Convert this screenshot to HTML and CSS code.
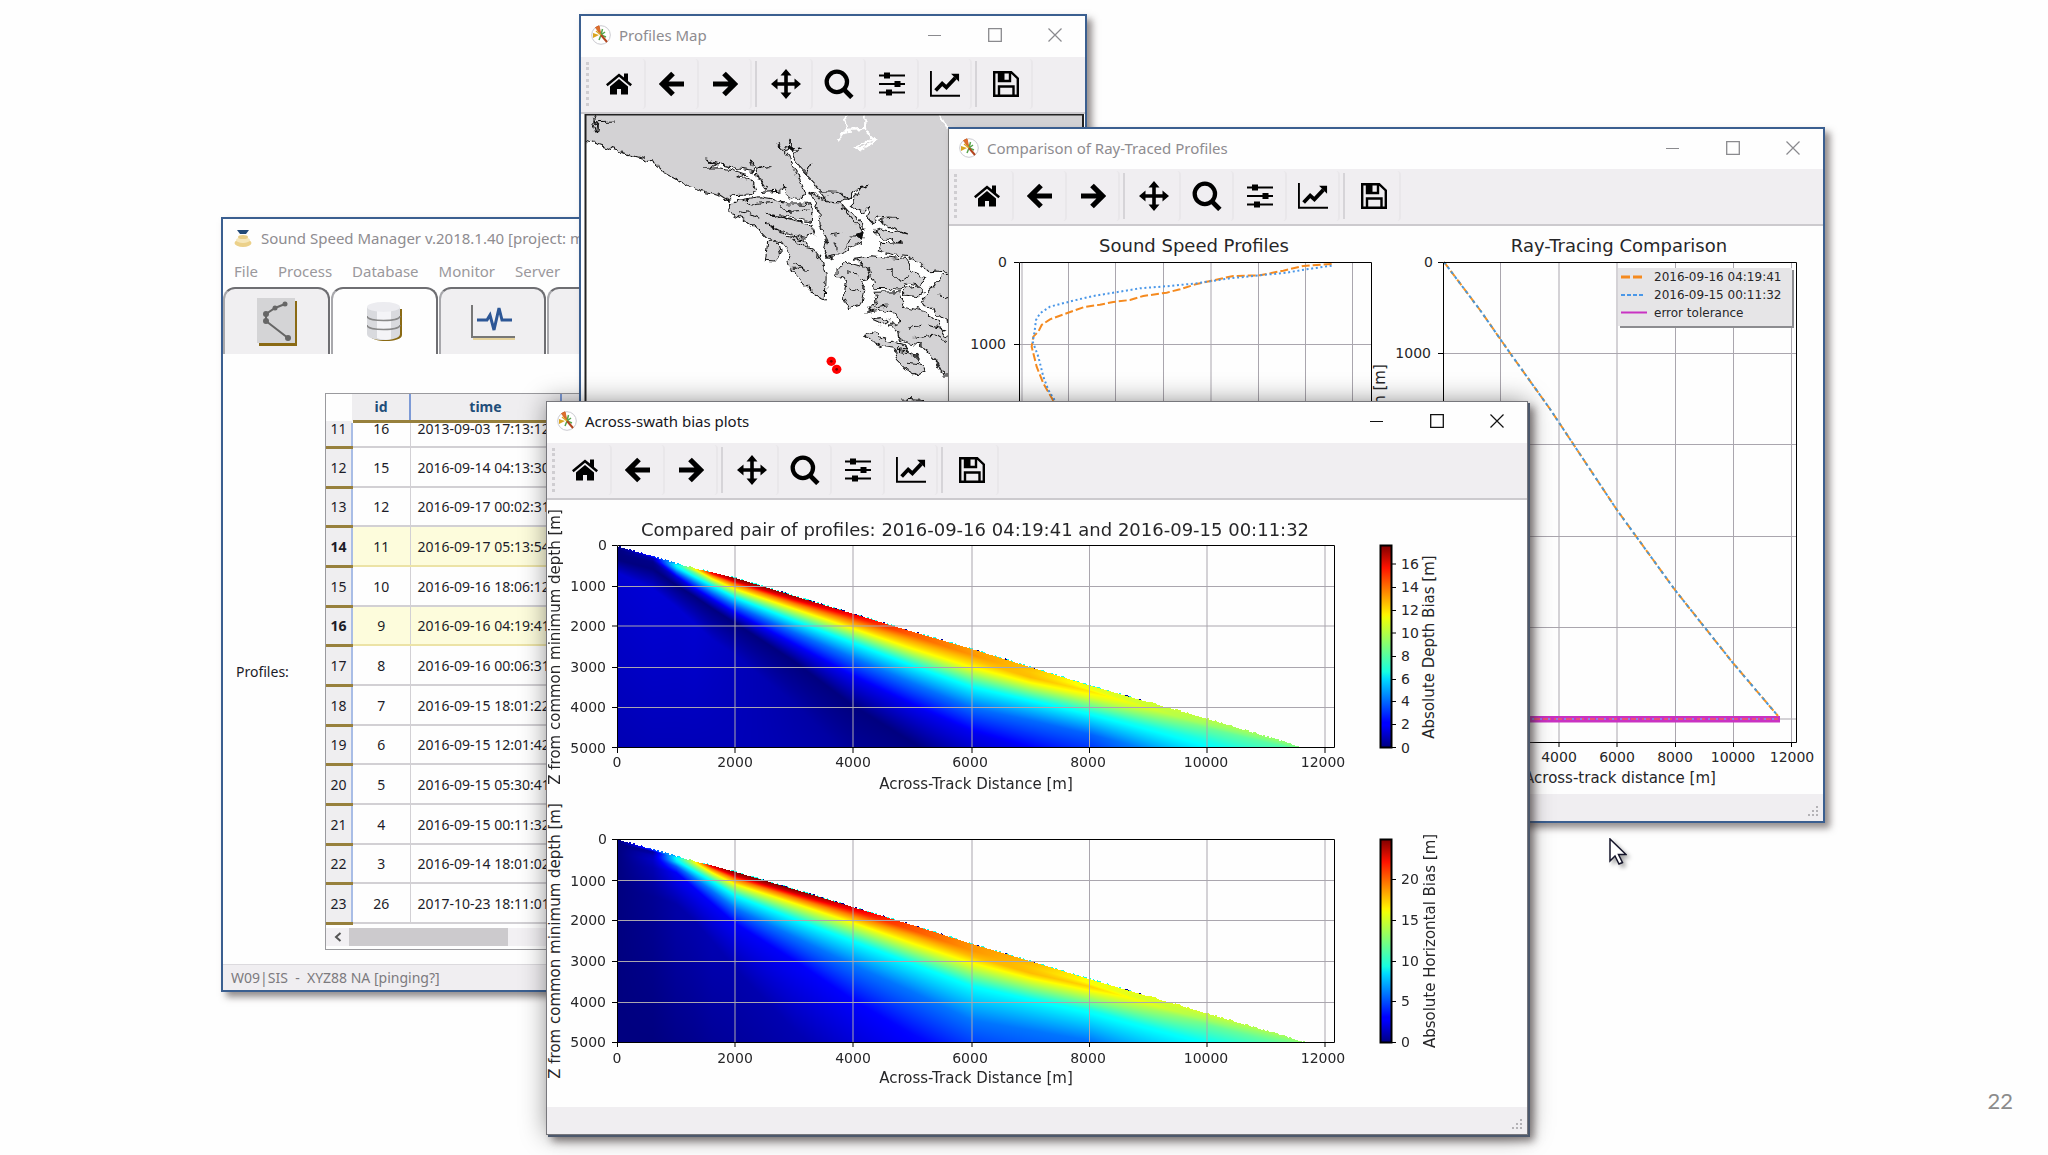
FILE: index.html
```html
<!DOCTYPE html>
<html lang="en">
<head>
<meta charset="utf-8">
<title>Sound Speed Manager</title>
<link rel="stylesheet" href="styles.css">
</head>
<body>
<svg class="defs" aria-hidden="true">
  <defs>
    <symbol id="app" viewBox="0 0 20 20">
      <circle cx="10" cy="10" r="9.300" fill="#fff" stroke="#c9c9cf" stroke-width="1"/>
      <path d="M10 10 4.500 2.500 8 .800z" fill="#e0702a" stroke="#d2642a" stroke-width="1"/>
      <path d="M8 10 2 13V8z" fill="#d9a520"/>
      <path d="M10 10l1.500-6M10 10l-2 5M10 10l4-3M10 10l5 2" stroke="#58a54c" stroke-width="1.500"/>
      <path d="m10 10 6 7" stroke="#b3441d" stroke-width="2"/>
      <path d="m5 6 5 4" stroke="#d9a520" stroke-width="1.400" fill="none"/>
    </symbol>
    <symbol id="home" viewBox="0 0 26 26">
      <path d="M13 8 4 15.500V23.500h7V18h4v5.500h7V15.500z"/>
      <path d="M13 2.500 0 13.300l1.600 1.900L13 5.800l11.400 9.400 1.600-1.900-4-3.400V2.500h-4v4.100z"/>
    </symbol>
    <symbol id="back" viewBox="0 0 26 26"><path d="m14 2.500-10.500 10.500L14 23.500M5 13h20" fill="none" stroke="#000" stroke-width="5.200"/></symbol>
    <symbol id="forward" viewBox="0 0 26 26"><path d="m12 2.500 10.500 10.500L12 23.500M21 13H1" fill="none" stroke="#000" stroke-width="5.200"/></symbol>
    <symbol id="pan" viewBox="0 0 30 30"><path d="m15 0 5.500 6.500h-3.700v6.700h6.700V9.500L30 15l-6.500 5.500v-3.700h-6.700v6.700h3.700L15 30l-5.500-6.500h3.700v-6.700H6.500v3.700L0 15l6.500-5.500v3.700h6.700V6.500H9.500z"/></symbol>
    <symbol id="zoom" viewBox="0 0 28 28"><circle cx="12" cy="12" r="9.500" fill="none" stroke="#000" stroke-width="4"/><path d="m18.500 19 7.500 7.500" stroke="#000" stroke-width="4.500"/></symbol>
    <symbol id="sliders" viewBox="0 0 26 26"><path d="M0 4.500h26M0 13h26M0 21.500h26" stroke="#000" stroke-width="2"/><path d="M5 1.500h6v6H5zM15.500 10h6v6h-6zM7 18.500h6v6H7z"/></symbol>
    <symbol id="chart" viewBox="0 0 32 28"><path d="M1 0v26.500h31" fill="none" stroke="#000" stroke-width="2"/><path d="m6 21 7-7.500 4.500 4L27 7.500" fill="none" stroke="#000" stroke-width="4"/><path d="M22.500 3H31v8.500z"/></symbol>
    <symbol id="save" viewBox="0 0 26 26"><path d="M1.200 1.200h17L24.800 7.500v17.300H1.200zM6 24V15.500h14.500V24M6 1.500v8.500h11V1.500" fill="none" stroke="#000" stroke-width="2.400"/><path d="M7 2h4.500v7H7z"/></symbol>
    <symbol id="min" viewBox="0 0 14 14"><path d="M0 7.500h13" stroke="currentColor"/></symbol>
    <symbol id="max" viewBox="0 0 14 14"><path d="M.700 .700h12.600v12.600H.700z" fill="none" stroke="currentColor" stroke-width="1.300"/></symbol>
    <symbol id="close" viewBox="0 0 14 14"><path d="m.500 .500 13 13m0-13-13 13" stroke="currentColor" stroke-width="1.200"/></symbol>
    <symbol id="grip" viewBox="0 0 12 12"><path d="M9 0h2v2H9zM9 4h2v2H9zM9 8h2v2H9zM5 4h2v2H5zM5 8h2v2H5zM1 8h2v2H1z"/></symbol>
    <linearGradient id="jet" x1="0" y1="1" x2="0" y2="0">
      <stop offset="0" stop-color="#000080"/><stop offset=".11" stop-color="#00f"/><stop offset=".125" stop-color="#00f"/>
      <stop offset=".34" stop-color="#00dcfe"/><stop offset=".375" stop-color="#16ffe1"/><stop offset=".64" stop-color="#eeff09"/>
      <stop offset=".66" stop-color="#fff200"/><stop offset=".89" stop-color="#ff1300"/><stop offset="1" stop-color="#800000"/>
    </linearGradient>
    <filter id="rough" x="-5%" y="-5%" width="110%" height="110%">
      <feTurbulence type="fractalNoise" baseFrequency=".05" numOctaves="2" seed="4"/>
      <feDisplacementMap in="SourceGraphic" scale="24" xChannelSelector="R" yChannelSelector="G"/>
    </filter>
  </defs>
</svg>

<main class="desktop">

<section class="window manager" aria-label="Sound Speed Manager">
  <header class="titlebar">
    <svg class="title-icon" viewBox="0 0 20 20"><ellipse cx="10" cy="15" rx="8.500" ry="4" fill="#ecd18a"/><ellipse cx="10" cy="12" rx="7" ry="3" fill="#f6e7ba"/><ellipse cx="10" cy="9" rx="5" ry="2" fill="#e8cd86"/><path d="M4 2h12l-3 4H7z" fill="#234a78"/></svg>
    <h1>Sound Speed Manager v.2018.1.40 [project: main]</h1>
  </header>
  <nav class="menu">
    <button>File</button><button>Process</button><button>Database</button><button>Monitor</button><button>Server</button><button>Setup</button>
  </nav>
  <div class="tabs" role="tablist">
    <button role="tab" aria-label="Editor"><svg width="40" height="48" viewBox="0 0 40 48"><path d="M2 3h38v45H2z" fill="#8a6a14"/><path d="M0 0h38v45H0z" fill="#d4d4d6"/><path d="m28 6-10 4-9 6v7l22 17" fill="none" stroke="#666" stroke-width="2"/><g fill="#666"><circle cx="28" cy="6" r="2.500"/><circle cx="18" cy="10" r="2.500"/><circle cx="9" cy="16" r="3"/><circle cx="9" cy="23" r="3"/><circle cx="31" cy="40" r="3"/></g></svg></button>
    <button role="tab" aria-selected="true" aria-label="Database"><svg width="36" height="40" viewBox="0 0 36 40"><path d="M3 7v26c0 8 32 8 32 0V7z" fill="#8a6a14"/><path d="M0 5v27c0 8 33 8 33 0V5z" fill="#d9dade"/><path d="M10 8v28c5 2 10 2 14 1V8z" fill="#f4f4f7"/><path d="M0 14c0 6 33 6 33 0M0 23c0 6 33 6 33 0" fill="none" stroke="#888" stroke-width="1.500"/><ellipse cx="16.500" cy="5" rx="16.500" ry="5" fill="#ececf0"/></svg></button>
    <button role="tab" aria-label="Monitor"><svg width="44" height="36" viewBox="0 0 44 36"><path d="M1 1v32h43" fill="none" stroke="#777" stroke-width="2"/><path d="M2 35h42" stroke="#e5d29c" stroke-width="2"/><path d="M6 16h10l3-5 4 15 5-22 3 12h10" fill="none" stroke="#2d5796" stroke-width="3"/></svg></button>
    <button role="tab" aria-label="Server"></button>
  </div>
  <div class="pane">
    <span class="label" id="profiles-label">Profiles:</span>
    <div class="grid">
      <table aria-labelledby="profiles-label">
        <thead><tr><td></td><th>id</th><th>time</th><th></th></tr></thead>
        <tbody>
          <tr><th>11</th><td>16</td><td>2013-09-03 17:13:12</td><td></td></tr>
          <tr><th>12</th><td>15</td><td>2016-09-14 04:13:30</td><td></td></tr>
          <tr><th>13</th><td>12</td><td>2016-09-17 00:02:31</td><td></td></tr>
          <tr class="selected"><th>14</th><td>11</td><td>2016-09-17 05:13:54</td><td></td></tr>
          <tr><th>15</th><td>10</td><td>2016-09-16 18:06:12</td><td></td></tr>
          <tr class="selected"><th>16</th><td>9</td><td>2016-09-16 04:19:41</td><td></td></tr>
          <tr><th>17</th><td>8</td><td>2016-09-16 00:06:31</td><td></td></tr>
          <tr><th>18</th><td>7</td><td>2016-09-15 18:01:22</td><td></td></tr>
          <tr><th>19</th><td>6</td><td>2016-09-15 12:01:42</td><td></td></tr>
          <tr><th>20</th><td>5</td><td>2016-09-15 05:30:41</td><td></td></tr>
          <tr><th>21</th><td>4</td><td>2016-09-15 00:11:32</td><td></td></tr>
          <tr><th>22</th><td>3</td><td>2016-09-14 18:01:02</td><td></td></tr>
          <tr><th>23</th><td>26</td><td>2017-10-23 18:11:01</td><td></td></tr>
        </tbody>
      </table>
      <div class="scrollbar"><button aria-label="Scroll left"><svg width="8" height="10" viewBox="0 0 8 10"><path d="M6.500 1 2 5l4.500 4" fill="none" stroke="#555" stroke-width="2"/></svg></button><span class="thumb"></span></div>
    </div>
  </div>
  <footer class="status">W09|SIS &nbsp;- &nbsp;XYZ88 NA [pinging?]</footer>
</section>

<section class="window map" aria-label="Profiles Map">
  <header class="titlebar">
    <svg class="title-icon"><use href="#app"/></svg>
    <h2>Profiles Map</h2>
    <div class="controls"><button aria-label="Minimize"><svg><use href="#min"/></svg></button><button aria-label="Maximize"><svg><use href="#max"/></svg></button><button aria-label="Close"><svg><use href="#close"/></svg></button></div>
  </header>
  <div class="toolbar">
    <button aria-label="Home"><svg><use href="#home"/></svg></button><button aria-label="Back"><svg><use href="#back"/></svg></button><button aria-label="Forward"><svg><use href="#forward"/></svg></button><i></i>
    <button aria-label="Pan"><svg class="wide"><use href="#pan"/></svg></button><button aria-label="Zoom"><svg class="wide"><use href="#zoom"/></svg></button><button aria-label="Subplots"><svg><use href="#sliders"/></svg></button><button aria-label="Edit axes"><svg class="wide"><use href="#chart"/></svg></button><i></i>
    <button aria-label="Save"><svg><use href="#save"/></svg></button>
  </div>
  <svg class="figure" viewBox="581 114 504 500">
    <svg x="585" y="114" width="499" height="500" viewBox="585 114 499 500">
    <g transform="translate(570 5) scale(.338 .3333)">
      <g filter="url(#rough)" stroke="#111" stroke-width="3" fill="#d3d2d4">
        <path d="M-40 290V395L75 415 115 428 180 450 240 467 270 490 278 502 315 522 350 545 400 560 440 568 470 588 480 572 530 570 550 560 545 540 525 520 490 515 520 508 480 494 440 488 400 490 435 480 400 462 450 480 500 492 545 500 532 462 550 490 590 485 552 492 560 520 578 545 570 562 625 558 632 545 640 565 655 578 688 584 695 565 688 540 675 512 655 480 648 455 615 415 645 440 655 400 655 435 685 428 658 445 672 475 700 505 715 480 702 515 735 550 760 572 800 565 822 582 835 570 850 545 885 541 858 548 838 585 832 600 850 615 870 625 892 600 880 640 895 655 910 630 970 635 915 640 930 660 1000 690 920 672 900 680 920 698 985 715 920 712 912 738 960 750 1000 755 1040 780 1062 800 1085 798 1105 800 1150 800 1600 900V200H-40Z"/>
        <path d="M472 600 500 585 560 575 600 582 640 596 700 598 716 610 714 650 640 632 585 625 650 645 715 660 724 690 690 700 630 680 580 655 640 690 690 705 720 735 740 760 758 810 755 885 730 875 690 835 660 800 645 770 652 745 625 710 590 705 560 675 520 645 490 632 470 625Z"/>
        <path d="M585 712 615 712 622 745 605 768 578 766Z"/>
        <path d="M710 562 735 575 760 590 800 590 820 615 850 645 868 680 862 715 830 728 800 752 760 760 752 735 760 705 740 660 735 610Z"/>
        <path d="M735 560 790 562 825 580 800 590 760 588ZM808 610 840 625 878 672 850 660Z"/>
        <path d="M790 790 820 772 855 782 880 770 888 820 860 825 872 850 865 895 825 908 808 870 818 830 790 812Z"/>
        <path d="M842 760 890 752 960 758 1000 765 1015 800 1055 822 1035 840 1000 835 975 852 900 850 890 800Z"/>
        <path d="M990 850 1030 842 1048 860 1030 875 990 870ZM1075 845 1100 810 1180 800V1000L1080 920 1035 890Z"/>
        <path d="M900 862 975 860 990 905 1050 920 1085 950 1110 990 1180 1010V1110H1105L1085 1070 1040 1020 980 1010 975 980 940 965 975 950 960 925 920 915 880 922 905 890Z"/>
        <path d="M890 942 920 938 950 948 920 956ZM875 992 905 980 920 1000 985 1018 1000 1035 960 1030 925 1025 905 1015Z"/>
        <path d="M960 1035 1000 1040 1035 1070 1050 1100 1030 1112 990 1090 968 1065Z"/>
        <path d="M80 328 70 345 82 360 78 385 70 350 132 348M980 1182 1055 1187 1000 1200M580 625 680 650M500 620 530 625 560 640M520 590 540 600 600 592M620 600 640 620 700 615M660 700 680 720 720 730M770 690 800 685M780 710 790 740M830 690 865 690M810 730 830 700M660 770 700 800M655 790 690 790M1000 1040 1030 1060M940 790 980 830 1000 815M830 850 860 860M820 800 850 810M1060 960 1110 975M1000 970 1040 960M1020 1000 1080 990 1110 1010M880 910 940 900M1090 870 1120 880M1000 1075 1040 1080" fill="none"/>
        <path d="M845 690 870 680 865 705ZM640 425 658 440 662 425Z" fill="#111"/>
      </g>
      <path d="M812 330 820 375 795 405M820 375 870 372 872 330M875 375 905 405 860 435 845 425 900 400M1090 330 1112 370" fill="none" stroke="#fff" stroke-width="7" filter="url(#rough)"/>
      <g fill="#f00"><circle cx="773" cy="1069" r="14"/><circle cx="789" cy="1093" r="14"/></g><g fill="#700"><circle cx="773" cy="1069" r="4"/><circle cx="789" cy="1093" r="4"/></g>
    </g>
    </svg>
    <path d="M585.500 620V114.500H1083V620" fill="none" stroke="#222" stroke-width="2"/>
  </svg>
</section>

<section class="window compare" aria-label="Comparison of Ray-Traced Profiles">
  <header class="titlebar">
    <svg class="title-icon"><use href="#app"/></svg>
    <h2>Comparison of Ray-Traced Profiles</h2>
    <div class="controls"><button aria-label="Minimize"><svg><use href="#min"/></svg></button><button aria-label="Maximize"><svg><use href="#max"/></svg></button><button aria-label="Close"><svg><use href="#close"/></svg></button></div>
  </header>
  <div class="toolbar">
    <button aria-label="Home"><svg><use href="#home"/></svg></button><button aria-label="Back"><svg><use href="#back"/></svg></button><button aria-label="Forward"><svg><use href="#forward"/></svg></button><i></i>
    <button aria-label="Pan"><svg class="wide"><use href="#pan"/></svg></button><button aria-label="Zoom"><svg class="wide"><use href="#zoom"/></svg></button><button aria-label="Subplots"><svg><use href="#sliders"/></svg></button><button aria-label="Edit axes"><svg class="wide"><use href="#chart"/></svg></button><i></i>
    <button aria-label="Save"><svg><use href="#save"/></svg></button>
  </div>
  <svg class="figure" viewBox="949 226 874 568">
    <path class="lines" d="M1022 262V742M1068.500 262V742M1115.500 262V742M1163.500 262V742M1211 262V742M1258.500 262V742M1305.500 262V742M1352.500 262V742M1019 344.500H1371"/>
    <g fill="none" stroke-width="6" transform="translate(940 120) scale(.3333)">
      <path stroke="#f58a1f" stroke-dasharray="24 9" d="M1175 432 1090 438 1030 452 960 466 880 468 815 482 770 492 720 508 680 518 610 528 570 540 520 546 480 554 430 562 380 580 330 598 305 615 295 635 280 650 275 680 290 740 310 790 340 842 360 900"/>
      <path stroke="#4a97e8" stroke-dasharray="6 8" d="M1175 437 1100 448 1040 458 960 466 870 475 770 490 690 498 600 505 540 515 460 528 400 542 330 560 300 580 288 600 283 640 278 665 295 710 310 770 325 810 345 842 360 900"/>
    </g>
    <path class="axes" d="M1019.500 262.500H1371.500V742H1019.500ZM1014 262.500H1019M1014 344.500H1019"/>
    <text class="figure-title" x="1194" y="252">Sound Speed Profiles</text>
    <text class="tick-y" x="1007" y="267">0</text><text class="tick-y" x="1006" y="349">1000</text>

    <path class="lines" d="M1500.500 262V742M1559 262V742M1617 262V742M1675.500 262V742M1733.500 262V742M1791.500 262V742M1444 353.500H1797M1444 444.500H1797M1444 536.500H1797M1444 627.500H1797M1444 719H1797"/>
    <path d="M1444 716H1780V722.500H1444Z" fill="#c932c2"/>
    <path d="M1444 719H1778" stroke="#e8507a" stroke-width="2" stroke-dasharray="8 3"/><path d="M1444 719H1778" stroke="#8f7bea" stroke-width="2" stroke-dasharray="2 6"/>
    <path fill="none" stroke="#f59322" stroke-width="2" d="M1444 262 1480 310 1510 353 1550 409 1617 510 1675 590 1733 663 1778 716" stroke-dasharray="7 4"/>
    <path fill="none" stroke="#4a97d8" stroke-width="2" d="M1444 262 1480 310 1510 353 1550 409 1617 510 1675 590 1733 663 1778 716" stroke-dasharray="3 3"/>
    <path class="axes" d="M1443.500 262.500H1796.500V742.500H1443.500ZM1438 262.500h5M1438 353.500h5M1559 742v5M1617 742v5M1675.500 742v5M1733.500 742v5M1791.500 742v5"/>
    <text class="figure-title" x="1619" y="252">Ray-Tracing Comparison</text>
    <text class="tick-y" x="1433" y="267">0</text><text class="tick-y" x="1431" y="358">1000</text>
    <text class="tick-x" x="1559" y="762">4000</text><text class="tick-x" x="1617" y="762">6000</text><text class="tick-x" x="1675" y="762">8000</text><text class="tick-x" x="1733" y="762">10000</text><text class="tick-x" x="1792" y="762">12000</text>
    <text class="axis-label" x="1620" y="783">Across-track distance [m]</text>
    <text class="axis-label" transform="translate(1385 502) rotate(-90)">Z from common minimum depth [m]</text>
    <path d="M1620 270h174v58h-174z" fill="#8c8c90"/><path d="M1618 268h174v58h-174z" fill="#e6e5e7"/>
    <path d="M1621 277h21" stroke="#f58a1f" stroke-width="3" stroke-dasharray="9 3"/><path d="M1621 295h24" stroke="#4a97e8" stroke-width="2" stroke-dasharray="4 2"/><path d="M1621 312.500h26" stroke="#c932c2" stroke-width="2"/>
    <text class="legend" x="1654" y="281">2016-09-16 04:19:41</text><text class="legend" x="1654" y="299">2016-09-15 00:11:32</text><text class="legend" x="1654" y="317">error tolerance</text>
  </svg>
  <footer class="status"><svg class="grip"><use href="#grip"/></svg></footer>
</section>

<section class="window bias active" aria-label="Across-swath bias plots">
  <header class="titlebar">
    <svg class="title-icon"><use href="#app"/></svg>
    <h2>Across-swath bias plots</h2>
    <div class="controls"><button aria-label="Minimize"><svg><use href="#min"/></svg></button><button aria-label="Maximize"><svg><use href="#max"/></svg></button><button aria-label="Close"><svg><use href="#close"/></svg></button></div>
  </header>
  <div class="toolbar">
    <button aria-label="Home"><svg><use href="#home"/></svg></button><button aria-label="Back"><svg><use href="#back"/></svg></button><button aria-label="Forward"><svg><use href="#forward"/></svg></button><i></i>
    <button aria-label="Pan"><svg class="wide"><use href="#pan"/></svg></button><button aria-label="Zoom"><svg class="wide"><use href="#zoom"/></svg></button><button aria-label="Subplots"><svg><use href="#sliders"/></svg></button><button aria-label="Edit axes"><svg class="wide"><use href="#chart"/></svg></button><i></i>
    <button aria-label="Save"><svg><use href="#save"/></svg></button>
  </div>
  <svg class="figure" viewBox="547 500 980 607">
    <foreignObject x="617" y="546" width="718" height="202"><canvas class="heat" data-field="depth" width="718" height="202"></canvas></foreignObject>
    <path class="lines" d="M735 546V748M853 546V748M972 546V748M1089.500 546V748M1207 546V748M1325 546V748M617 586.500H1335M617 626H1335M617 667.500H1335M617 707.500H1335"/>
    <path class="axes" d="M617.500 545.500H1334.500V747.500H617.500ZM612 545.500h5M612 586.500h5M612 626h5M612 667.500h5M612 707.500h5M612 747.500h5M617.500 748v5M735 748v5M853 748v5M972 748v5M1089.500 748v5M1207 748v5M1325 748v5"/>
    <text class="figure-title" x="975" y="536">Compared pair of profiles: 2016-09-16 04:19:41 and 2016-09-15 00:11:32</text>
    <g class="tick-y"><text x="607" y="550">0</text><text x="606" y="591">1000</text><text x="606" y="631">2000</text><text x="606" y="672">3000</text><text x="606" y="712">4000</text><text x="606" y="753">5000</text></g>
    <g class="tick-x"><text x="617" y="767">0</text><text x="735" y="767">2000</text><text x="853" y="767">4000</text><text x="970" y="767">6000</text><text x="1088" y="767">8000</text><text x="1206" y="767">10000</text><text x="1323" y="767">12000</text></g>
    <text class="axis-label" x="976" y="789">Across-Track Distance [m]</text>
    <text class="axis-label" transform="translate(560 647) rotate(-90)">Z from common minimum depth [m]</text>
    <path class="axes bar" d="M1380.500 545.500h11v202h-11z"/>
    <path class="axes" d="M1391 564h5M1391 587.500h5M1391 610.500h5M1391 633h5M1391 656.500h5M1391 679.500h5M1391 701.500h5M1391 724.500h5M1391 747.500h5"/>
    <g class="tick-c"><text x="1401" y="569">16</text><text x="1401" y="592">14</text><text x="1401" y="615">12</text><text x="1401" y="638">10</text><text x="1401" y="661">8</text><text x="1401" y="684">6</text><text x="1401" y="706">4</text><text x="1401" y="729">2</text><text x="1401" y="753">0</text></g>
    <text class="axis-label" transform="translate(1434 647) rotate(-90)">Absolute Depth Bias [m]</text>

    <foreignObject x="617" y="839" width="718" height="203"><canvas class="heat" data-field="horizontal" width="718" height="203"></canvas></foreignObject>
    <path class="lines" d="M735 839V1042M853 839V1042M972 839V1042M1089.500 839V1042M1207 839V1042M1325 839V1042M617 880.500H1335M617 920.500H1335M617 961.500H1335M617 1002.500H1335"/>
    <path class="axes" d="M617.500 839.500H1334.500V1042.500H617.500ZM612 839.500h5M612 880.500h5M612 920.500h5M612 961.500h5M612 1002.500h5M612 1042.500h5M617.500 1042v5M735 1042v5M853 1042v5M972 1042v5M1089.500 1042v5M1207 1042v5M1325 1042v5"/>
    <g class="tick-y"><text x="607" y="844">0</text><text x="606" y="886">1000</text><text x="606" y="925">2000</text><text x="606" y="966">3000</text><text x="606" y="1007">4000</text><text x="606" y="1047">5000</text></g>
    <g class="tick-x"><text x="617" y="1063">0</text><text x="735" y="1063">2000</text><text x="853" y="1063">4000</text><text x="970" y="1063">6000</text><text x="1088" y="1063">8000</text><text x="1206" y="1063">10000</text><text x="1323" y="1063">12000</text></g>
    <text class="axis-label" x="976" y="1083">Across-Track Distance [m]</text>
    <text class="axis-label" transform="translate(560 941) rotate(-90)">Z from common minimum depth [m]</text>
    <path class="axes bar" d="M1380.500 839.500h11v203h-11z"/>
    <path class="axes" d="M1391 879.500h5M1391 920.500h5M1391 961.500h5M1391 1001.500h5M1391 1042.500h5"/>
    <g class="tick-c"><text x="1401" y="884">20</text><text x="1401" y="925">15</text><text x="1401" y="966">10</text><text x="1401" y="1006">5</text><text x="1401" y="1047">0</text></g>
    <text class="axis-label" transform="translate(1435 941) rotate(-90)">Absolute Horizontal Bias [m]</text>
  </svg>
  <footer class="status"><svg class="grip"><use href="#grip"/></svg></footer>
</section>

<svg class="pointer" viewBox="0 0 18 28"><path d="M1 1v22l5-5 4 8 3.500-1.500-4-8H17z" fill="#fff" stroke="#15152a" stroke-width="1.500"/></svg>
<p class="page-number">22</p>
</main>
<script src="heat.js"></script>
</body>
</html>
```
FILE: styles.css
```css
* { box-sizing: border-box; }
body { margin: 0; background: #fefefe; font-family: "Noto Sans", sans-serif; font-size: 14px; color: #1c1c28; }
button { font: inherit; color: inherit; background: none; border: 0; padding: 0; }
h1, h2 { margin: 0; font-size: 15px; font-weight: 400; color: #8e8c90; white-space: nowrap; }
.defs { position: absolute; width: 0; height: 0; }
.desktop { position: relative; min-height: 100vh; overflow: hidden; display: flex; align-items: flex-end; justify-content: flex-end; padding: 0 35px 40px; }
.page-number { margin: 0; font-family: Lato, sans-serif; font-size: 22px; line-height: 28px; color: #8b8b8b; }

.window { position: absolute; display: flex; flex-direction: column; background: #fefefe; border: 2px solid #3b5f90; box-shadow: 5px 5px 7px rgba(60, 50, 50, .55); }
.manager { left: 221px; top: 217px; width: 700px; }
.map { left: 579px; top: 14px; width: 508px; }
.compare { left: 948px; top: 127px; width: 877px; border-left: 1px solid #777; }
.bias { left: 546px; top: 401px; width: 982px; border: 1px solid #77777c; box-shadow: 2px 2px 0 #4c586c, 6px 6px 8px rgba(60, 50, 50, .6), 0 0 24px rgba(0, 0, 0, .4); }

.titlebar { display: flex; align-items: center; height: 41px; padding: 0 0 3px 10px; gap: 8px; }
.compare .titlebar { height: 40px; }
.title-icon { width: 20px; height: 20px; }
.active h2 { color: #16161c; }
.controls { display: flex; margin-left: auto; color: #8a8a8e; }
.active .controls { color: #111; }
.controls button { display: flex; justify-content: center; align-items: center; width: 60px; height: 38px; }
.controls svg { width: 14px; height: 14px; }

.toolbar { display: flex; align-items: center; height: 57px; padding: 0 0 2px 12px; background: #f0eef1; border-bottom: 2px solid #cccace; position: relative; }
.toolbar::before { content: ""; position: absolute; left: 5px; top: 5px; height: 44px; border-left: 3px dotted #cfcdd1; }
.toolbar button { display: flex; justify-content: center; align-items: center; width: 53px; height: 50px; border-right: 2px solid #e9e7ea; border-radius: 4px; }
.toolbar svg { width: 26px; height: 26px; }
.toolbar svg.wide { width: 30px; height: 30px; }
.toolbar i { width: 2px; height: 46px; margin: 0 3px; background: #d6d4d8; }

.figure { display: block; width: 100%; font-family: "DejaVu Sans", sans-serif; fill: #262628; }
.figure-title { font-size: 18px; text-anchor: middle; }
.axis-label { font-size: 15px; text-anchor: middle; }
.tick-x { font-size: 14px; text-anchor: middle; }
.tick-y { font-size: 14px; text-anchor: end; }
.tick-c { font-size: 14px; }
.legend { font-size: 12px; }
.lines { fill: none; stroke: #aaa6ae; stroke-width: 1; }
.axes { fill: none; stroke: #000; stroke-width: 1; }
.axes.bar { fill: url(#jet); stroke-width: 2; }
.heat { display: block; }

.status { display: flex; align-items: center; height: 27px; background: #f0eef1; color: #7c7a7e; }
.grip { width: 12px; height: 12px; margin: 8px 4px 0 auto; fill: #b4b2b6; }

.menu { display: flex; gap: 20px; height: 27px; padding-left: 11px; font-size: 15px; color: #9a989c; }
.menu button { height: 22px; }
.tabs { display: flex; gap: 1px; height: 67px; background: #fefefe; }
.tabs button { display: flex; justify-content: center; align-items: center; width: 107px; background: #f0eff1; border: 2px solid #6e6e72; border-left-color: #a8a8ac; border-bottom: 0; border-radius: 12px 12px 0 0; }
.tabs [aria-selected="true"] { background: #fefefe; }
.pane { display: flex; align-items: center; padding: 39px 0 14px 13px; }
.label { width: 89px; }
.grid { flex: 1; border: 1px solid #9a9a9e; }
table { border-collapse: collapse; table-layout: fixed; width: 100%; }
td, th { padding: 0; height: 40px; text-align: center; font-weight: 400; border: 0 solid #d2d0d4; border-width: 0 1px 2px 0; }
tbody tr:nth-child(3n) > * { height: 39px; }
tbody tr:first-child > * { height: 26px; vertical-align: top; line-height: 12px; }
tbody th { background: #efeef0; border-bottom: 3px solid #97803c; border-right: 2px solid #a9bde6; }
tbody td:nth-child(3) { text-align: left; padding-left: 7px; }
thead > tr > * { height: 27px; width: 58px; font-weight: 700; color: #1f4e7a; background: #efeef0; border-bottom: 3px solid #97803c; border-right: 2px solid #7d9ad6; }
thead td { width: 26px; background: #fefefe; border-color: transparent; }
thead th:nth-child(3) { width: 151px; }
thead th:nth-child(4) { width: auto; }
.selected td { background: #fdfcdc; border-bottom-color: #ece3a6; }
.selected th { font-weight: 700; }
.scrollbar { display: flex; height: 24px; padding: 3px 0; background: #f2f0f3; background-clip: content-box; }
.scrollbar button { display: flex; align-items: center; justify-content: center; width: 23px; }
.thumb { width: 159px; background: #cccacd; }
.manager .status { height: 26px; padding-left: 8px; border-top: 1px solid #dcdade; }
.pointer { position: absolute; left: 1609px; top: 838px; width: 18px; height: 28px; filter: drop-shadow(3px 3px 2px rgba(0, 0, 0, .35)); }
```
FILE: heat.js
```js
// Each column: across-track distance, then [depth, colour value] stops from the swath edge down.
const fields = {
  depth: [
    [0, [[0,0],[50,0],[80,0],[100,0],[130,0],[160,0],[200,0],[330,0],[650,.08],[5000,.05]]],
    [600, [[250,.15],[270,.1],[290,.05],[310,.04],[330,.04],[360,.02],[400,.01],[560,0],[1050,.085],[5000,.055]]],
    [1000, [[430,.3],[440,.35],[460,.38],[480,.38],[550,.33],[640,.22],[760,.09],[960,0],[1500,.08],[5000,.055]]],
    [1300, [[540,.6],[560,.6],[590,.57],[640,.48],[750,.37],[900,.22],[1050,.1],[1230,0],[1900,.08],[5000,.055]]],
    [1600, [[640,.88],[680,.84],[720,.75],[800,.62],[960,.38],[1160,.22],[1320,.1],[1530,0],[2300,.07],[5000,.055]]],
    [2000, [[780,1],[860,.92],[940,.76],[1060,.62],[1260,.38],[1480,.22],[1680,.1],[1900,0],[2700,.06],[5000,.055]]],
    [3000, [[1230,.97],[1310,.9],[1410,.76],[1550,.62],[1830,.38],[2130,.23],[2450,.11],[2850,0],[3900,.04],[5600,.05]]],
    [4000, [[1670,.9],[1740,.86],[1860,.75],[2040,.62],[2380,.38],[2760,.24],[3250,.11],[3950,0],[5300,.03],[6500,.05]]],
    [5000, [[2110,.79],[2210,.78],[2340,.71],[2540,.62],[2940,.38],[3380,.24],[3950,.11],[4850,0],[6200,.03],[7500,.05]]],
    [6000, [[2535,.72],[2680,.73],[2820,.68],[3000,.62],[3460,.38],[4000,.23],[4600,.11],[5800,0],[7000,.02],[8000,.04]]],
    [7000, [[2990,.69],[3110,.68],[3240,.69],[3400,.61],[3800,.38],[4300,.23],[5050,.11],[6600,0],[7500,.02],[8500,.04]]],
    [8000, [[3440,.6],[3520,.61],[3580,.65],[3720,.6],[4110,.39],[4650,.22],[5500,.11],[7500,0],[8000,0],[9000,0]]],
    [10000, [[4270,.56],[4350,.54],[4420,.52],[4500,.48],[4800,.4],[5400,.3],[7000,.1],[8000,0],[9000,0],[9500,0]]],
    [11700, [[5020,.5],[5050,.48],[5080,.46],[5100,.45],[5500,.4],[6000,.3],[7500,.1],[8500,0],[9000,0],[9500,0]]]
  ],
  horizontal: [
    [0, [[0,0],[60,0],[100,0],[150,0],[200,0],[350,0],[600,0],[1200,0],[5000,0]]],
    [600, [[250,.2],[270,.13],[300,.03],[350,.04],[400,.06],[500,.07],[700,.05],[1400,.02],[5000,0]]],
    [1000, [[420,.3],[430,.36],[450,.38],[480,.38],[560,.34],[660,.22],[820,.12],[1600,.04],[5000,.01]]],
    [1300, [[540,.6],[560,.6],[590,.58],[640,.52],[770,.38],[950,.24],[1200,.12],[2000,.045],[5500,.01]]],
    [1600, [[640,.92],[680,.86],[730,.75],[820,.62],[1020,.38],[1260,.24],[1580,.12],[2500,.05],[5800,.015]]],
    [2000, [[800,1],[890,.92],[980,.76],[1110,.62],[1380,.38],[1700,.24],[2080,.12],[3200,.045],[6000,.02]]],
    [3000, [[1230,1],[1320,.92],[1430,.76],[1580,.62],[1950,.38],[2400,.24],[3000,.12],[4700,.05],[7000,.02]]],
    [4000, [[1670,.92],[1760,.86],[1880,.75],[2060,.62],[2500,.38],[3100,.24],[3960,.125],[6000,.05],[8000,.03]]],
    [5000, [[2110,.8],[2240,.79],[2370,.71],[2570,.62],[3050,.38],[3750,.24],[4800,.13],[7000,.06],[8500,.04]]],
    [6000, [[2570,.73],[2730,.73],[2880,.69],[3050,.62],[3600,.38],[4450,.24],[5500,.14],[8000,.08],[9000,.05]]],
    [7000, [[3000,.7],[3150,.68],[3290,.69],[3450,.61],[3930,.38],[4700,.24],[5900,.15],[8300,.08],[9000,.05]]],
    [8000, [[3440,.62],[3540,.62],[3620,.67],[3750,.61],[4200,.39],[4950,.24],[6200,.15],[8500,.08],[9000,.05]]],
    [10000, [[4290,.58],[4380,.55],[4450,.53],[4560,.48],[5000,.38],[6000,.25],[7500,.15],[8500,.1],[9000,.1]]],
    [11700, [[5020,.52],[5050,.5],[5100,.48],[5200,.46],[5500,.4],[6500,.3],[8000,.15],[8500,.1],[9000,.1]]]
  ]
};

function jet(v) {
  const clamp = c => Math.max(0, Math.min(1, c)) * 255;
  return [clamp(1.5 - Math.abs(4 * v - 3)), clamp(1.5 - Math.abs(4 * v - 2)), clamp(1.5 - Math.abs(4 * v - 1))];
}

function stopsAt(columns, x) {
  let i = 0;
  while (i < columns.length - 2 && columns[i + 1][0] < x) i++;
  const [x0, a] = columns[i], [x1, b] = columns[i + 1];
  const t = (x - x0) / (x1 - x0);
  return a.map((p, k) => [p[0] + (b[k][0] - p[0]) * t, p[1] + (b[k][1] - p[1]) * t]);
}

document.querySelectorAll('.heat').forEach(canvas => {
  const columns = fields[canvas.dataset.field];
  const { width, height } = canvas;
  const context = canvas.getContext('2d');
  const image = context.createImageData(width, height);
  for (let px = 0; px < width; px++) {
    const x = px * 2000 / 118;
    if (x > 11650) break;
    const stops = stopsAt(columns, x);
    const noise = Math.abs(Math.sin(Math.floor(px / 2) * 12.9898) * 43758.5453) % 1;
    for (let py = 0; py < height; py++) {
      const z = py * 5000 / height;
      const edge = stops[0][0] - (noise > .6 ? 25 : 0);
      if (z < edge) continue;
      let k = 0;
      while (k < stops.length - 2 && stops[k + 1][0] < z) k++;
      const span = Math.max(1, stops[k + 1][0] - stops[k][0]);
      const t = Math.max(0, Math.min(1, (z - stops[k][0]) / span));
      let v = stops[k][1] + (stops[k + 1][1] - stops[k][1]) * t;
      if (z < stops[0][0] && x > 1300 && x < 9000) v = noise > .9 ? .02 : .4;
      const colour = jet(v);
      const at = (py * width + px) * 4;
      image.data[at] = colour[0];
      image.data[at + 1] = colour[1];
      image.data[at + 2] = colour[2];
      image.data[at + 3] = 255;
    }
  }
  context.putImageData(image, 0, 0);
});
```
